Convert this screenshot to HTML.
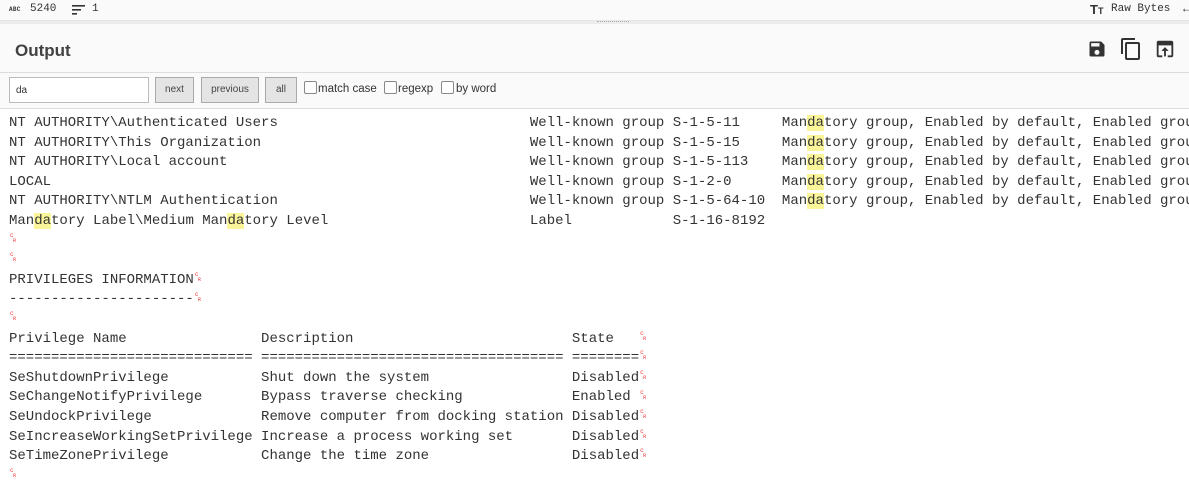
<!DOCTYPE html>
<html><head><meta charset="utf-8">
<style>
*{box-sizing:border-box;margin:0;padding:0}
body{width:1189px;height:499px;overflow:hidden;background:#fff;font-family:"Liberation Sans",sans-serif;position:relative}
.top{position:absolute;left:0;top:0;width:1189px;height:21px;background:#fafafa;border-bottom:1px solid #e6e6e6;font-family:"Liberation Mono",monospace;font-size:11px;color:#333}
.sep{position:absolute;left:0;top:21px;width:1189px;height:3px;background:#ececec}
.hdr{position:absolute;left:0;top:24px;width:1189px;height:49px;background:#fafafa;border-bottom:1px solid #dcdcdc}
.hdr h1{position:absolute;left:15px;top:17px;font-size:17px;font-weight:bold;color:#424242}
.search{position:absolute;left:0;top:73px;width:1189px;height:36px;background:#fafafa;border-bottom:1px solid #ddd;font-size:11px;color:#333}
.btn{position:absolute;top:4px;height:26px;border:1px solid #aaa;background:#e4e4e4;color:#444;font-size:10px;text-align:center;line-height:24px}
.cb{position:absolute;top:8px;width:13px;height:13px;border:1px solid #888;border-radius:2px;background:#fff}
.lbl{position:absolute;top:10px;font-size:11.5px;color:#333}
.out{position:absolute;left:0;top:109px;width:1189px;height:390px;overflow:hidden;background:#fff}
pre{position:absolute;left:9px;top:-14.6px;font-family:"Liberation Mono",monospace;font-size:14px;line-height:19.6px;color:#333;white-space:pre}
.h{background:#fbf59a}
.c{display:inline-block;width:8.4px;height:10px;position:relative;color:#e33;font-size:6px;line-height:6px;vertical-align:middle}
.c:before{content:"c";position:absolute;left:1px;top:-2px}
.c:after{content:"R";position:absolute;left:4px;top:3px;font-size:5px}
</style></head><body>
<div class="top">
<span style="position:absolute;left:9px;top:6px;font-size:6px;font-weight:bold;letter-spacing:.3px">ABC</span>
<span style="position:absolute;left:30px;top:3px">5240</span>
<svg style="position:absolute;left:72px;top:5px" width="14" height="10"><rect x="0" y="0" width="13" height="1.6" fill="#333"/><rect x="0" y="4" width="9" height="1.6" fill="#333"/><rect x="0" y="8" width="5" height="1.6" fill="#333"/></svg>
<span style="position:absolute;left:92px;top:3px">1</span>
<span style="position:absolute;left:1090px;top:2px;font-family:'Liberation Sans';font-weight:bold;font-size:13px">T<span style="font-size:9px">T</span></span>
<span style="position:absolute;left:1111px;top:3px">Raw Bytes</span>
<span style="position:absolute;left:1183px;top:2px;font-size:12px">&#8592;</span>
</div>
<div class="sep"><div style="position:absolute;left:597px;top:0;width:32px;height:2px;border-top:1px dotted #aaa"></div></div>
<div class="hdr"><h1>Output</h1>
<svg style="position:absolute;left:1087px;top:15px" width="20" height="20" viewBox="0 0 24 24"><path fill="#333" d="M17 3H5a2 2 0 0 0-2 2v14a2 2 0 0 0 2 2h14a2 2 0 0 0 2-2V7l-4-4zm-5 16a3 3 0 1 1 0-6 3 3 0 0 1 0 6zm3-10H5V5h10v4z"/></svg>
<svg style="position:absolute;left:1119px;top:13px" width="24" height="24" viewBox="0 0 24 24"><path fill="#333" d="M16 1H4a2 2 0 0 0-2 2v14h2V3h12V1zm3 4H8a2 2 0 0 0-2 2v14a2 2 0 0 0 2 2h11a2 2 0 0 0 2-2V7a2 2 0 0 0-2-2zm0 16H8V7h11v14z"/></svg>
<svg style="position:absolute;left:1154px;top:14px" width="22" height="22" viewBox="0 0 24 24"><path fill="#333" d="M19 3H5a2 2 0 0 0-2 2v14a2 2 0 0 0 2 2h4v-2H5V8h14v11h-4v2h4a2 2 0 0 0 2-2V5a2 2 0 0 0-2-2zm-7 7l-4 4h3v6h2v-6h3l-4-4z"/></svg>
</div>
<div class="search">
<div style="position:absolute;left:9px;top:4px;width:140px;height:26px;border:1px solid #bbb;background:#fff;padding:7px 6px;font-size:10px">da</div>
<div class="btn" style="left:155px;width:39px">next</div>
<div class="btn" style="left:201px;width:58px">previous</div>
<div class="btn" style="left:265px;width:32px">all</div>
<div class="cb" style="left:304px"></div><span class="lbl" style="left:318px">match case</span>
<div class="cb" style="left:384px"></div><span class="lbl" style="left:398px">regexp</span>
<div class="cb" style="left:441px"></div><span class="lbl" style="left:456px">by word</span>
</div>
<div class="out"><pre>NT AUTHORITY\Everyone                                         Well-known group S-1-1-0      Mandatory group, Enabled by default, Enabled group
NT AUTHORITY\Authenticated Users                              Well-known group S-1-5-11     Man<span class="h">da</span>tory group, Enabled by default, Enabled group
NT AUTHORITY\This Organization                                Well-known group S-1-5-15     Man<span class="h">da</span>tory group, Enabled by default, Enabled group
NT AUTHORITY\Local account                                    Well-known group S-1-5-113    Man<span class="h">da</span>tory group, Enabled by default, Enabled group
LOCAL                                                         Well-known group S-1-2-0      Man<span class="h">da</span>tory group, Enabled by default, Enabled group
NT AUTHORITY\NTLM Authentication                              Well-known group S-1-5-64-10  Man<span class="h">da</span>tory group, Enabled by default, Enabled group
Man<span class="h">da</span>tory Label\Medium Man<span class="h">da</span>tory Level                        Label            S-1-16-8192
<span class="c"></span>
<span class="c"></span>
PRIVILEGES INFORMATION<span class="c"></span>
----------------------<span class="c"></span>
<span class="c"></span>
Privilege Name                Description                          State   <span class="c"></span>
============================= ==================================== ========<span class="c"></span>
SeShutdownPrivilege           Shut down the system                 Disabled<span class="c"></span>
SeChangeNotifyPrivilege       Bypass traverse checking             Enabled <span class="c"></span>
SeUndockPrivilege             Remove computer from docking station Disabled<span class="c"></span>
SeIncreaseWorkingSetPrivilege Increase a process working set       Disabled<span class="c"></span>
SeTimeZonePrivilege           Change the time zone                 Disabled<span class="c"></span>
<span class="c"></span></pre></div>
</body></html>
